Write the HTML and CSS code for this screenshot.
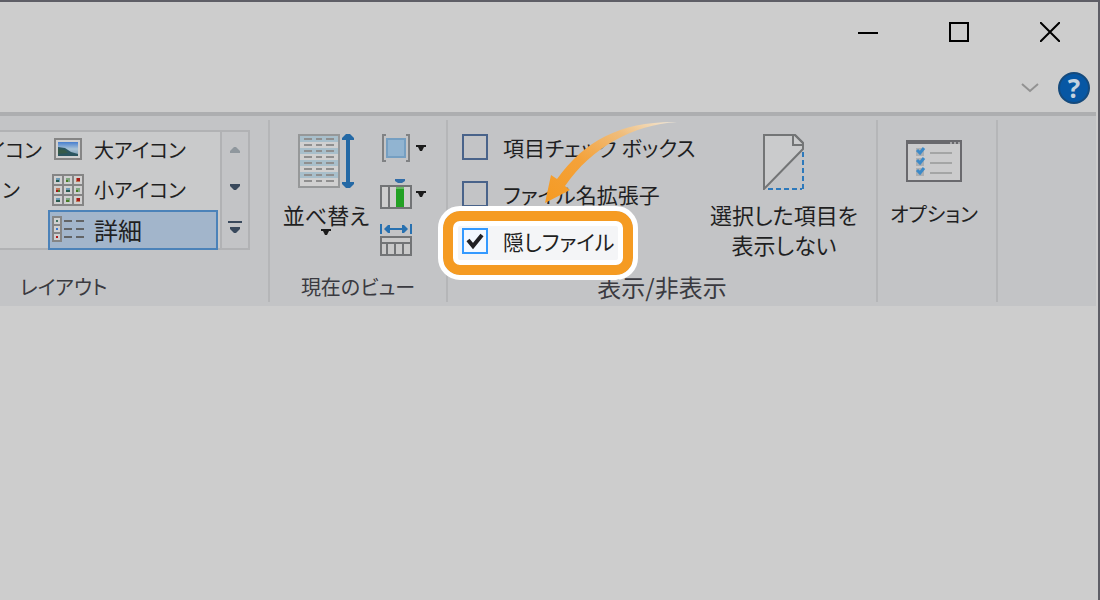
FILE: index.html
```html
<!DOCTYPE html>
<html lang="ja">
<head>
<meta charset="utf-8">
<title>エクスプローラー</title>
<link rel="stylesheet" href="styles.css">
</head>
<body>
<div class="window">
  <header class="titlebar">
    <button class="caption" aria-label="最小化"><svg width="20" height="20"><path d="M0 11H20" stroke="#000" stroke-width="2"/></svg></button>
    <button class="caption" aria-label="最大化"><svg width="20" height="20"><rect x="1" y="1" width="18" height="18" fill="none" stroke="#000" stroke-width="2"/></svg></button>
    <button class="caption" aria-label="閉じる"><svg width="20" height="20"><path d="M0 0L20 20M20 0L0 20" stroke="#000" stroke-width="2"/></svg></button>
  </header>
  <div class="tabs">
    <button class="plain" aria-label="リボンの最小化"><svg width="18" height="10"><path d="M1 1L9 8L17 1" fill="none" stroke="#929292" stroke-width="2"/></svg></button>
    <button class="help" aria-label="ヘルプ">?</button>
  </div>
  <main class="ribbon">
    <section class="group layout">
      <div class="gallery">
        <div class="column clipped">
          <button class="item">イコン</button>
          <button class="item second">ン</button>
        </div>
        <div class="column">
          <button class="item">
            <svg width="32" height="32">
              <defs><linearGradient id="sky" x2="0" y2="1"><stop offset="0" stop-color="#477fd0"/><stop offset=".5" stop-color="#a9c3d6"/><stop offset="1" stop-color="#7798ae"/></linearGradient></defs>
              <rect x="3" y="5" width="26" height="20" fill="#d0d0d0" stroke="#858585" stroke-width="2"/>
              <rect x="6" y="8" width="20" height="14" fill="url(#sky)"/>
              <path d="M6 13L13 14L19 18L26 20V22H6Z" fill="#2c5660"/><path d="M6 15L13 16L16 19L6 20Z" fill="#355a48"/>
            </svg>大アイコン</button>
          <button class="item">
            <svg width="32" height="32">
              <path d="M1 1H31V31H1ZM11 1V31M21 1V31M1 11H31M1 21H31" fill="#d0d0d0" stroke="#858585" stroke-width="2"/>
              <path d="M4 4h4v4h-4zM14 14h4v4h-4zM4 24h4v4h-4z" fill="#6c9bb4"/><path d="M14 4h4v4h-4zM24 14h4v4h-4zM14 24h4v4h-4z" fill="#7fa580"/><path d="M24 4h4v4h-4zM4 14h4v4h-4zM24 24h4v4h-4z" fill="#bd765a"/>
              <path d="M4 6h3v2h-3zM14 16h4v2h-4zM4 26h4v2h-4z" fill="#285b50"/><path d="M14 6h2v2h-2zM24 16h2v2h-2zM14 26h3v2h-3zM6 16h2v2h-2z" fill="#487c25"/><path d="M25 4h3v3h-3zM4 16h2v2h-2zM25 24h3v3h-3z" fill="#a51b18"/>
            </svg>小アイコン</button>
          <button class="item selected">
            <svg width="32" height="32">
              <path d="M1 3H9V27H1ZM1 11H9M1 19H9" fill="#d0d0d0" stroke="#858585" stroke-width="2"/>
              <path d="M4 6h2v2h-2z" fill="#447463"/><path d="M4 14h2v2h-2z" fill="#3978ce"/><path d="M4 22h2v2h-2z" fill="#b31818"/>
              <path d="M12 7h8M24 7h8M12 15h8M24 15h8M12 23h8M24 23h8" stroke="#626466" stroke-width="2"/>
            </svg>詳細</button>
        </div>
        <div class="scroller">
          <button class="plain" aria-label="上へ" disabled><svg width="10" height="6"><path d="M0 6V4L4 0H6L10 4V6Z" fill="#8f979d"/></svg></button>
          <button class="plain" aria-label="下へ"><svg width="10" height="6"><path d="M0 0V2L4 6H6L10 2V0Z" fill="#39495c"/></svg></button>
          <button class="plain" aria-label="その他"><svg width="14" height="12"><path d="M0 0H14V2H0ZM2 6V8L6 12H8L12 8V6Z" fill="#39495c"/></svg></button>
        </div>
      </div>
      <h2 class="name">レイアウト</h2>
    </section>
    <section class="group view">
      <div class="content">
        <button class="large">
          <svg class="picture" width="56" height="56">
            <rect x="1" y="1" width="40" height="52" fill="#d0d0d0" stroke="#969899" stroke-width="2"/>
            <path d="M2 5H40M2 17H40M2 29H40M2 41H40" stroke="#a8bfcb" stroke-width="6"/>
            <path d="M6 5h8M18 5h6M28 5h8M6 11h8M18 11h6M28 11h8M6 17h8M18 17h6M28 17h8M6 23h8M18 23h6M28 23h8M6 29h8M18 29h6M28 29h8M6 35h8M18 35h6M28 35h8M6 41h8M18 41h6M28 41h8M6 47h8M18 47h6M28 47h8" stroke="#8f8f8f" stroke-width="2"/>
            <path d="M50 2V52" stroke="#2469a5" stroke-width="4"/><path d="M44 6V4L48 0H52L56 4V6ZM44 48V50L48 54H52L56 50V48Z" fill="#2469a5"/>
          </svg>
          <span>並べ替え</span>
          <svg width="10" height="6"><path d="M0 0V2H2L4 6H6L8 2H10V0Z" fill="#1b1b1b"/></svg>
        </button>
        <div class="tools">
          <button class="tool" aria-label="グループ化">
            <svg width="32" height="32"><path d="M6 3H3V29H6M26 3H29V29H26" fill="none" stroke="#808284" stroke-width="2"/><rect x="7" y="7" width="18" height="18" fill="#91b4d1" stroke="#759fc2" stroke-width="2"/></svg>
            <svg width="10" height="6"><path d="M0 0V2H2L4 6H6L8 2H10V0Z" fill="#1b1b1b"/></svg>
          </button>
          <button class="tool" aria-label="列の追加">
            <svg width="32" height="32"><path d="M15 1H25V3L22 5H18L15 3Z" fill="#326da8"/><rect x="1" y="8" width="30" height="22" fill="#cecece" stroke="#727476" stroke-width="2"/><path d="M9 8V30" stroke="#727476" stroke-width="2"/><path d="M16 9h8v20h-8z" fill="#23a124"/><path d="M16 9h8v2h-8z" fill="#66ba64"/></svg>
            <svg width="10" height="6"><path d="M0 0V2H2L4 6H6L8 2H10V0Z" fill="#1b1b1b"/></svg>
          </button>
          <button class="tool" aria-label="すべての列のサイズを自動的に変更する">
            <svg width="32" height="32"><path d="M1 0V10M31 0V10M7 5H25" stroke="#2871b0" stroke-width="2"/><path d="M4 5L8 1H10V9H8ZM28 5L24 1H22V9H24Z" fill="#2871b0"/><path d="M1 13H31V31H1ZM1 19H31M7 19V31M15 19V31M23 19V31" fill="#c9c9c9" stroke="#727476" stroke-width="2"/></svg>
          </button>
        </div>
      </div>
      <h2 class="name">現在のビュー</h2>
    </section>
    <section class="group visibility">
      <div class="content">
        <div class="checks">
          <label class="check"><input type="checkbox">項目チェック ボックス</label>
          <label class="check"><input type="checkbox">ファイル名拡張子</label>
          <label class="check marked"><input type="checkbox" checked>隠しファイル</label>
          <svg class="pointer" width="136" height="84" viewBox="0 0 136 84">
            <defs><linearGradient id="fade" x1="0" y1="1" x2="1" y2="0"><stop offset="0" stop-color="#f59a22"/><stop offset=".4" stop-color="#f4a23a"/><stop offset=".72" stop-color="#efbd7c"/><stop offset="1" stop-color="#f3eadb"/></linearGradient></defs>
            <path d="M3 83L9 55L15 59C43 20 80 1 135 2C91 5 50 27 23 66L28 70Z" fill="url(#fade)"/>
          </svg>
        </div>
        <button class="large hide">
          <svg class="picture" width="44" height="56">
            <path d="M2 55V1H33L41 9V15Z" fill="#cacbcc" stroke="#737576" stroke-width="2"/><path d="M31 1V11H41M33 1L41 9" fill="none" stroke="#737576" stroke-width="2"/>
            <path d="M41 18V56M6 55H40" fill="none" stroke="#2d79bb" stroke-width="2" stroke-dasharray="5 3"/>
          </svg>
          <span>選択した項目を<br>表示しない</span>
        </button>
      </div>
      <h2 class="name kanji">表示/非表示</h2>
    </section>
    <section class="group options">
      <button class="large">
        <svg class="picture" width="56" height="56">
          <rect x="1" y="7" width="54" height="40" fill="#cbcbcc" stroke="#69696d" stroke-width="2"/><path d="M0 8H56" stroke="#69696d" stroke-width="4"/><path d="M44 9h2M48 9h2M52 9h2" stroke="#a6a6a8" stroke-width="2"/>
          <path d="M10 14h8v8h-8zM10 24h8v8h-8zM10 34h8v8h-8z" fill="#acafb2"/>
          <path d="M11 16L14 19L18 14M11 26L14 29L18 24M11 36L14 39L18 34" fill="none" stroke="#3d8ac8" stroke-width="3"/>
          <path d="M24 19h22M24 29h22M24 39h22" stroke="#a4a5a5" stroke-width="2"/>
        </svg>
        <span>オプション</span>
      </button>
    </section>
  </main>
</div>
</body>
</html>
```
FILE: styles.css
```css
* { box-sizing: border-box; }
body {
  margin: 0;
  background: #cdcdcd;
  color: #1f1f22;
  font: 22px/30px "Noto Sans CJK JP", sans-serif;
  font-feature-settings: "palt";
}
button {
  margin: 0;
  padding: 0;
  border: 0;
  background: none;
  color: inherit;
  font: inherit;
  font-feature-settings: inherit;
}
svg { display: block; flex: none; }
.window {
  min-height: 100vh;
  border-top: 2px solid #5e5e66;
  border-right: 2px solid #5e5e66;
  overflow: hidden;
}
.titlebar { display: flex; justify-content: flex-end; height: 60px; padding-right: 3px; }
.caption { display: grid; place-items: center; width: 91px; }
.tabs {
  display: flex;
  justify-content: flex-end;
  align-items: center;
  gap: 19px;
  height: 50px;
  padding: 2px 8px 0 0;
}
.help {
  width: 32px;
  height: 32px;
  border: 2px solid #154a7c;
  border-radius: 50%;
  background: #0757a4;
  color: #c5d2df;
  font: bold 26px/28px "Open Sans", sans-serif;
}
.ribbon {
  display: flex;
  margin-right: 2px;
  padding: 4px 0;
  border-top: 4px solid #adaeb0;
  background: #c3c4c6;
}
.group {
  display: flex;
  flex-direction: column;
  flex: none;
  height: 182px;
  border-right: 2px solid #b5b6b8;
}
.name {
  margin: auto 0 0;
  font-size: 20px;
  font-weight: inherit;
  line-height: 30px;
  text-align: center;
  color: #3a3a40;
}
.kanji { font-size: 24px; }
.layout { width: 270px; padding-top: 10px; }
.layout .name { padding-left: 20px; text-align: left; }
.gallery {
  display: flex;
  width: 250px;
  height: 120px;
  border: 2px solid #b1b2b4;
  border-left: 0;
  background: #c9cacb;
}
.column { display: flex; flex-direction: column; width: 170px; margin: -2px 0; }
.item {
  display: flex;
  align-items: center;
  gap: 10px;
  height: 40px;
  padding-left: 4px;
  font-size: 20px;
  white-space: nowrap;
}
.clipped { width: 48px; overflow: hidden; }
.clipped .item { justify-content: flex-end; padding: 0 6px 0 0; }
.clipped .second { padding-right: 28px; }
.selected { border: 2px solid #4b82b9; background: #a2b5cb; padding-left: 2px; font-size: 24px; }
.scroller {
  display: grid;
  width: 28px;
  margin-left: 2px;
  border-left: 2px solid #b1b2b4;
  background: #c3c4c6;
}
.plain { display: grid; place-items: center; }
.content { display: flex; }
.view { width: 178px; }
.large { display: flex; flex-direction: column; align-items: center; padding-top: 14px; white-space: nowrap; }
.picture { margin-bottom: 9px; }
.view .large { width: 110px; padding-left: 2px; }
.tools { display: grid; gap: 14px; padding-top: 12px; }
.tool { display: flex; align-items: center; gap: 4px; }
.visibility { width: 430px; }
.checks { position: relative; display: flex; flex-direction: column; gap: 13px; width: 258px; padding: 10px 0 0 10px; }
.check {
  display: flex;
  align-items: center;
  align-self: flex-start;
  gap: 15px;
  height: 34px;
  padding-left: 4px;
  font-size: 21px;
  white-space: nowrap;
}
.check input {
  appearance: none;
  flex: none;
  width: 26px;
  height: 26px;
  margin: 0;
  border: 2px solid #49638a;
}
.marked { position: relative; z-index: 1; min-width: 160px; }
.marked::before {
  content: "";
  position: absolute;
  z-index: -1;
  inset: -13px -15px -17px;
  border: 10px solid #f59b22;
  border-radius: 17px;
  outline: 5px solid #fff;
  background: #f4f5f7;
  box-shadow: inset 0 0 0 5px #fff;
}
.marked input {
  border-color: #3399ff;
  background: #f3f8ff url("data:image/svg+xml,%3Csvg xmlns='http://www.w3.org/2000/svg' viewBox='0 0 22 22'%3E%3Cpath d='M4 10L9 16L18 5' fill='none' stroke='%23202024' stroke-width='4'/%3E%3C/svg%3E");
}
.pointer { position: absolute; z-index: 2; left: 94px; top: 0; pointer-events: none; }
.hide { width: 156px; }
.options { width: 120px; }
.options .large { width: 112px; font-size: 20px; }
```
